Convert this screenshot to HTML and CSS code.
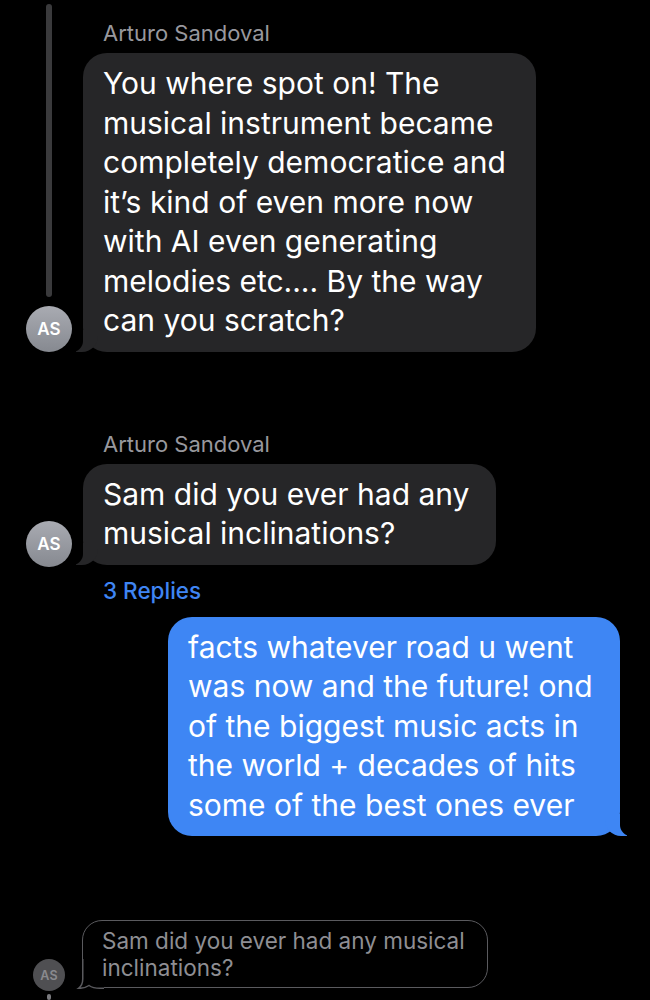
FILE: index.html
```html
<!DOCTYPE html>
<html lang="en">
<head>
<meta charset="utf-8">
<title>Thread</title>
<link rel="stylesheet" href="styles.css">
</head>
<body>
<main class="thread">
  <section class="msg msg-first">
    <div class="gutter gutter-span">
      <div class="thread-line"></div>
      <div class="avatar">AS</div>
    </div>
    <div class="sender">Arturo Sandoval</div>
    <div class="bubble in b1">You where spot on! The musical instrument became completely democratice and it’s kind of even more now with AI even generating melodies etc.... By the way can you scratch?</div>
  </section>

  <section class="msg msg-second">
    <div class="sender">Arturo Sandoval</div>
    <div class="gutter gutter-bubble">
      <div class="avatar">AS</div>
    </div>
    <div class="bubble in b2">Sam did you ever had any musical inclinations?</div>
    <div class="replies">3 Replies</div>
  </section>

  <section class="out-row">
    <div class="bubble out">facts whatever road u went was now and the future! ond of the biggest music acts in the world + decades of hits some of the best ones ever</div>
  </section>

  <section class="msg msg-quote">
    <div class="gutter gutter-bubble">
      <div class="avatar avatar-small">AS</div>
      <div class="thread-stub"></div>
    </div>
    <div class="quote">Sam did you ever had any musical inclinations?<svg class="quote-tail" width="30" height="30" viewBox="0 0 30 30"><path d="M0 0H14V18H30V31H0Z" fill="#000"/><path d="M8.75 0V20C8.75 24.5 7 27.5 4.5 29.25C9 29.5 12 28.5 15 26.5C18 28.6 21 29.25 26 29.25H30" fill="none" stroke="#5a5a5e" stroke-width="1.5"/></svg></div>
  </section>
</main>
</body>
</html>
```

FILE: styles.css
```css
* { box-sizing: border-box; }

html, body {
  margin: 0;
  padding: 0;
  background: #000;
}

body {
  width: 650px;
  height: 1000px;
  overflow: hidden;
  font-family: "Inter", "Liberation Sans", sans-serif;
  color: #fff;
  -webkit-font-smoothing: antialiased;
}

.thread {
  display: flex;
  flex-direction: column;
  padding-top: 4px;
}

.msg {
  display: grid;
  grid-template-columns: 83px auto;
  justify-content: start;
}

.gutter {
  grid-column: 1;
  display: flex;
  flex-direction: column;
  align-items: center;
  justify-content: flex-end;
  padding-left: 26px;
  padding-right: 11px;
}

.gutter-span {
  grid-row: 1 / 3;
  gap: 9px;
}

.gutter-bubble {
  grid-row: 2;
  align-self: end;
}

.msg-second .gutter-bubble .avatar {
  margin-bottom: -2px;
}

.msg-quote .gutter-bubble {
  grid-row: 1;
  align-self: end;
}

.thread-line {
  flex: 1;
  width: 6px;
  border-radius: 3px;
  background: #3a3a3c;
}

.avatar {
  width: 46px;
  height: 46px;
  border-radius: 50%;
  background: linear-gradient(#a9abb2, #868990);
  color: #fff;
  font-size: 17px;
  font-weight: 600;
  display: flex;
  align-items: center;
  justify-content: center;
  letter-spacing: 0.2px;
}

.avatar-small {
  width: 32px;
  height: 32px;
  background: #4f4f52;
  color: #8a8a8e;
  font-size: 12.5px;
  margin-bottom: -3px;
}

.thread-stub {
  width: 4px;
  height: 6px;
  margin-top: 6px;
  margin-bottom: -12px;
  border-radius: 2px;
  background: #7a7a7e;
}

.sender {
  grid-column: 2;
  padding-left: 20px;
  font-size: 22px;
  line-height: 24px;
  color: #98989e;
  margin-top: 17px;
  margin-bottom: 8px;
}

.msg-second {
  margin-top: 63px;
}

.bubble {
  position: relative;
  font-size: 30px;
  line-height: 39.5px;
  padding: 11px 20px 11px 20px;
  border-radius: 24px;
}

.bubble.in {
  grid-column: 2;
  grid-row: 2;
  background: #262628;
}

.b1 { width: 453px; }
.b2 { width: 413px; }

.bubble.in::before {
  content: "";
  position: absolute;
  bottom: 0;
  left: -7px;
  width: 22px;
  height: 22px;
  background: #262628;
  border-bottom-right-radius: 16px;
}

.bubble.in::after {
  content: "";
  position: absolute;
  bottom: 0;
  left: -11px;
  width: 11px;
  height: 22px;
  background: #000;
  border-bottom-right-radius: 11px;
}

.replies {
  grid-column: 2;
  grid-row: 3;
  padding-left: 20px;
  margin-top: 13px;
  font-size: 22.5px;
  line-height: 26px;
  font-weight: 500;
  color: #3f85f3;
}

.out-row {
  display: flex;
  justify-content: flex-end;
  padding-right: 30px;
  margin-top: 13px;
}

.bubble.out {
  width: 452px;
  background: #3e86f4;
  color: #fff;
}

.bubble.out::before {
  content: "";
  position: absolute;
  bottom: 0;
  right: -7px;
  width: 22px;
  height: 22px;
  background: #3e86f4;
  border-bottom-left-radius: 16px;
}

.bubble.out::after {
  content: "";
  position: absolute;
  bottom: 0;
  right: -11px;
  width: 11px;
  height: 22px;
  background: #000;
  border-bottom-left-radius: 11px;
}

.msg-quote {
  margin-top: 84px;
}

.quote {
  grid-column: 2;
  grid-row: 1;
  position: relative;
  width: 406px;
  margin-left: -1px;
  padding: 6px 19px 6px 19px;
  border: 1.5px solid #5a5a5e;
  border-radius: 20px;
  font-size: 22.5px;
  line-height: 27px;
  color: #8e8e93;
}

.quote-tail {
  position: absolute;
  left: -9.5px;
  bottom: -1.5px;
  display: block;
}
```
